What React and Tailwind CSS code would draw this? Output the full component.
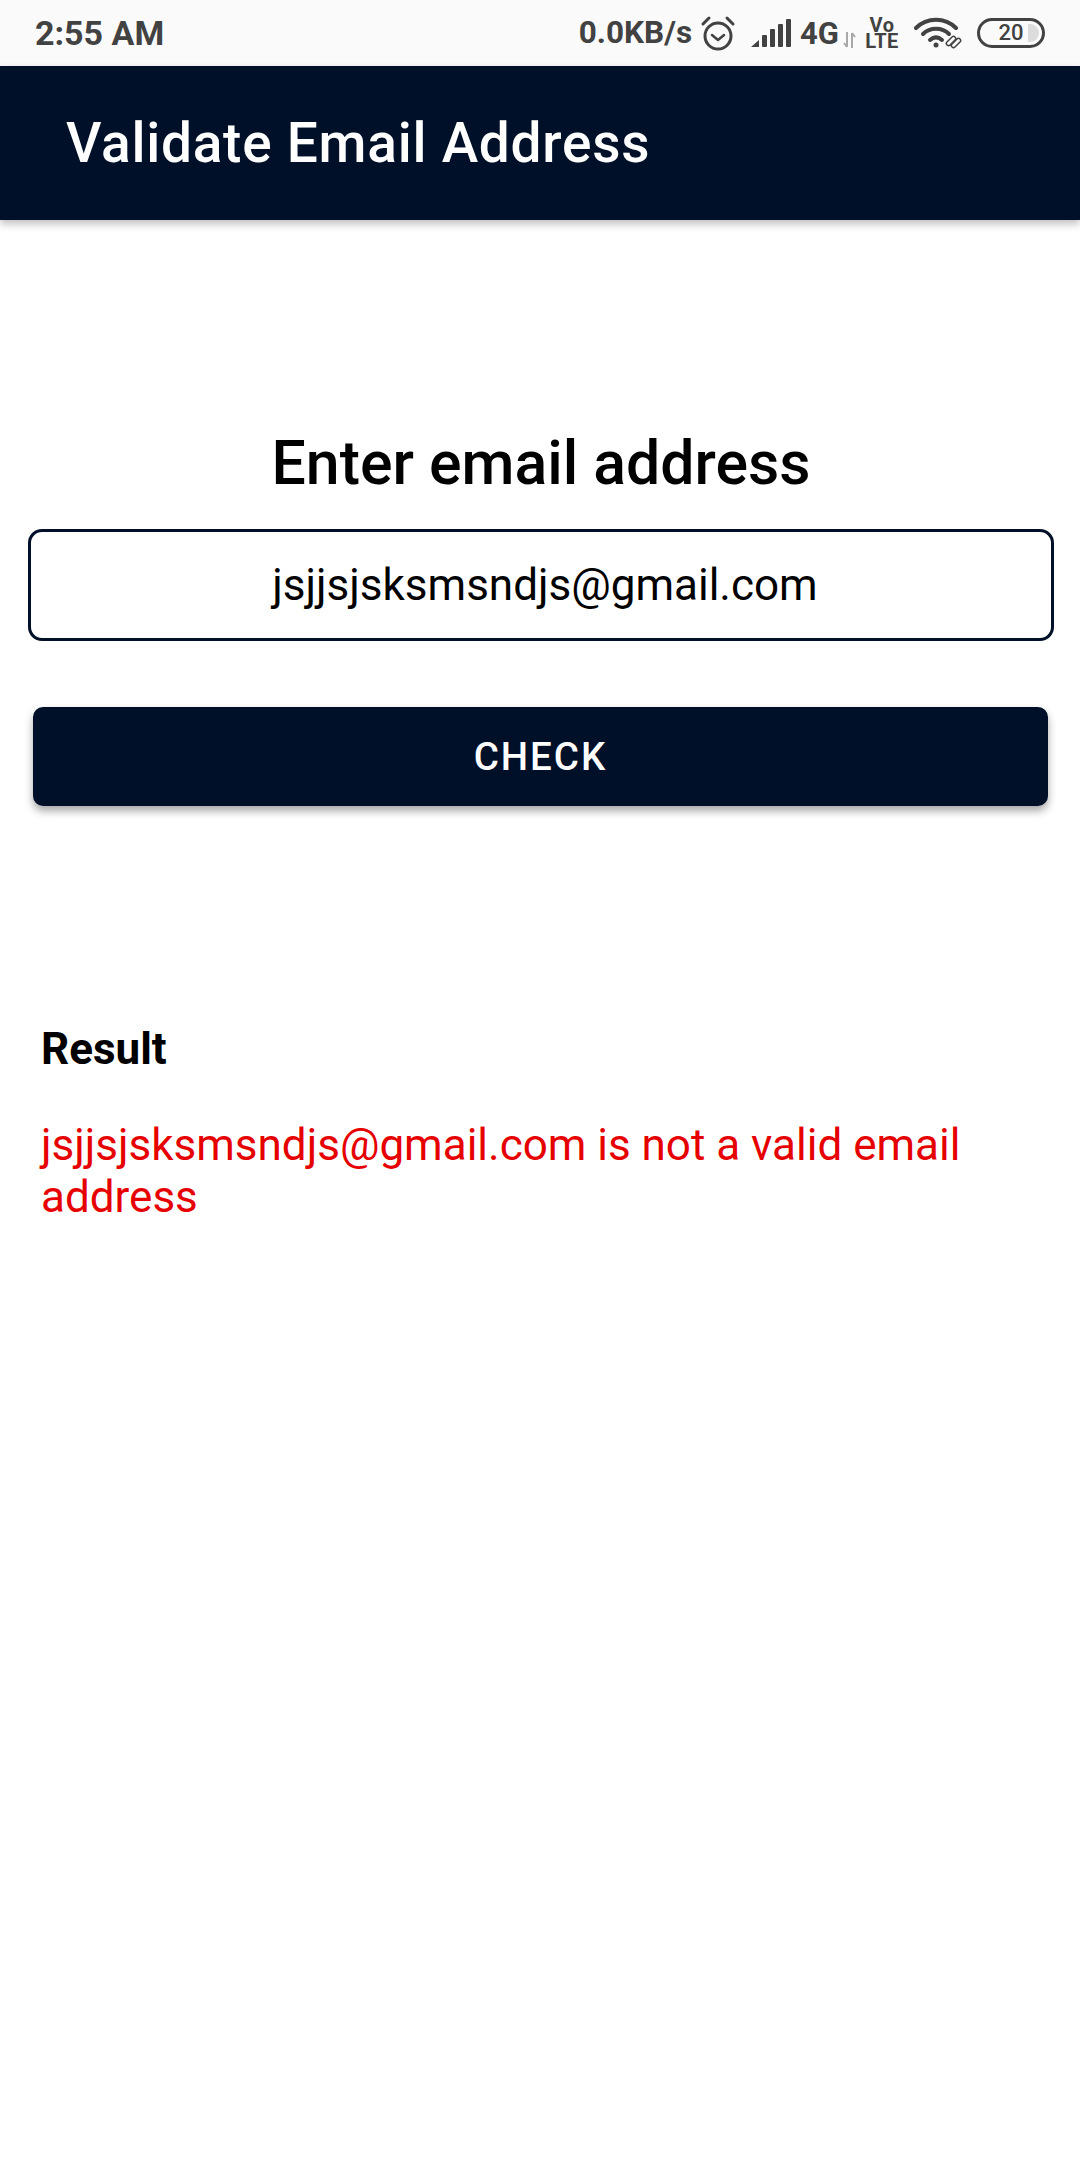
function AlarmIcon() {
  return (
    <svg width="36" height="36" viewBox="0 0 36 36" fill="none" stroke="#424242" strokeWidth="3" strokeLinecap="round" strokeLinejoin="round">
      <circle cx="18" cy="21" r="13" />
      <path d="M12 20l6 5 6-5" strokeWidth="2.5" />
      <path d="M3 9l6-6" />
      <path d="M33 9l-6-6" />
    </svg>
  )
}

function SignalIcon() {
  return (
    <svg width="40" height="30" viewBox="0 0 40 30" fill="#424242">
      <path d="M0 29l8-7v7z" />
      <rect x="11" y="17" width="5" height="12" rx="1" />
      <rect x="19" y="11" width="5" height="18" rx="1" />
      <rect x="27" y="6" width="5" height="23" rx="1" />
      <rect x="35" y="1" width="5" height="28" rx="1" />
    </svg>
  )
}

function DataArrows() {
  return (
    <svg width="13" height="16" viewBox="0 0 13 16" fill="none" stroke="#a8a8a8" strokeWidth="2">
      <path d="M4 0v15M1 11l3 4" />
      <path d="M9 16V1M12 5L9 1" />
    </svg>
  )
}

function WifiIcon() {
  return (
    <svg width="48" height="32" viewBox="0 0 48 32" fill="none" stroke="#424242" strokeLinecap="round">
      <path d="M2 11c11-11 29-11 40 0" strokeWidth="4" />
      <path d="M9 17c7-7 19-7 26 0" strokeWidth="4" />
      <path d="M16 23c4-3.500 8-3.500 12 0" strokeWidth="4" />
      <circle cx="22" cy="28" r="2.500" fill="#424242" stroke="none" />
      <path d="M33 25l5-5c2-2 5 1 3 3l-5 5c-2 2-5-1-3-3zM38 27l5-5c2-2 5 1 3 3l-5 5c-2 2-5-1-3-3z" strokeWidth="1.500" />
    </svg>
  )
}

function StatusBar() {
  return (
    <div className="flex h-[66px] items-center justify-between bg-[#fafafa] pl-[35px] pr-[35px] font-['Roboto',sans-serif] font-bold text-[#424242]">
      <span className="text-[34px] leading-none">2:55 AM</span>
      <div className="flex items-center">
        <span className="text-[31.5px] leading-none">0.0KB/s</span>
        <div className="ml-[8px]"><AlarmIcon /></div>
        <div className="ml-[15px]"><SignalIcon /></div>
        <span className="ml-[9px] text-[31px] leading-none">4G</span>
        <div className="ml-[4px] mt-[14px]"><DataArrows /></div>
        <span className="ml-[9px] w-[34px] text-center text-[20px] leading-[16px] tracking-[0.5px]">Vo LTE</span>
        <div className="ml-[15px]"><WifiIcon /></div>
        <div className="relative ml-[15px] flex h-[30px] w-[68px] items-center justify-center rounded-full border-[3px] border-[#424242]">
          <span className="absolute right-[3px] top-[3px] h-[18px] w-[11px] rounded-r-full bg-[#dcdcdc]" />
          <span className="relative text-[22px] font-medium leading-none">20</span>
        </div>
      </div>
    </div>
  )
}

export default function App() {
  return (
    <div className="h-[2160px] w-[1080px] overflow-hidden bg-white font-['Roboto',sans-serif]">
      <StatusBar />

      <header className="flex h-[154px] items-center bg-[#001029] pl-[66px] shadow-[0_4px_8px_rgba(0,0,0,0.25)]">
        <h1 className="text-[55px] font-medium leading-none tracking-[0.75px] text-white">Validate Email Address</h1>
      </header>

      <main className="pl-[28px] pr-[26px]">
        <h2 className="mt-[209px] text-center text-[60.75px] font-medium leading-[70px] text-black">Enter email address</h2>

        <div className="mt-[30px] flex h-[112px] items-center justify-center rounded-[14px] border-[3px] border-[#001029] pl-[8px] text-[44px] text-black">
          jsjjsjsksmsndjs@gmail.com
        </div>

        <button
          type="button"
          className="ml-[5px] mt-[66px] flex h-[99px] w-[1015px] items-center justify-center rounded-[10px] bg-[#001029] text-[38.5px] font-medium tracking-[2px] text-white shadow-[0_5px_8px_rgba(0,0,0,0.35)]"
        >
          CHECK
        </button>

        <section className="mt-[217px] pl-[13px] pr-[14px]">
          <p className="text-[44px] font-bold leading-[52px] text-black">Result</p>
          <p className="mt-[44px] text-[44px] leading-[52px] text-[#e60000]">
            jsjjsjsksmsndjs@gmail.com is not a valid email address
          </p>
        </section>
      </main>
    </div>
  )
}
